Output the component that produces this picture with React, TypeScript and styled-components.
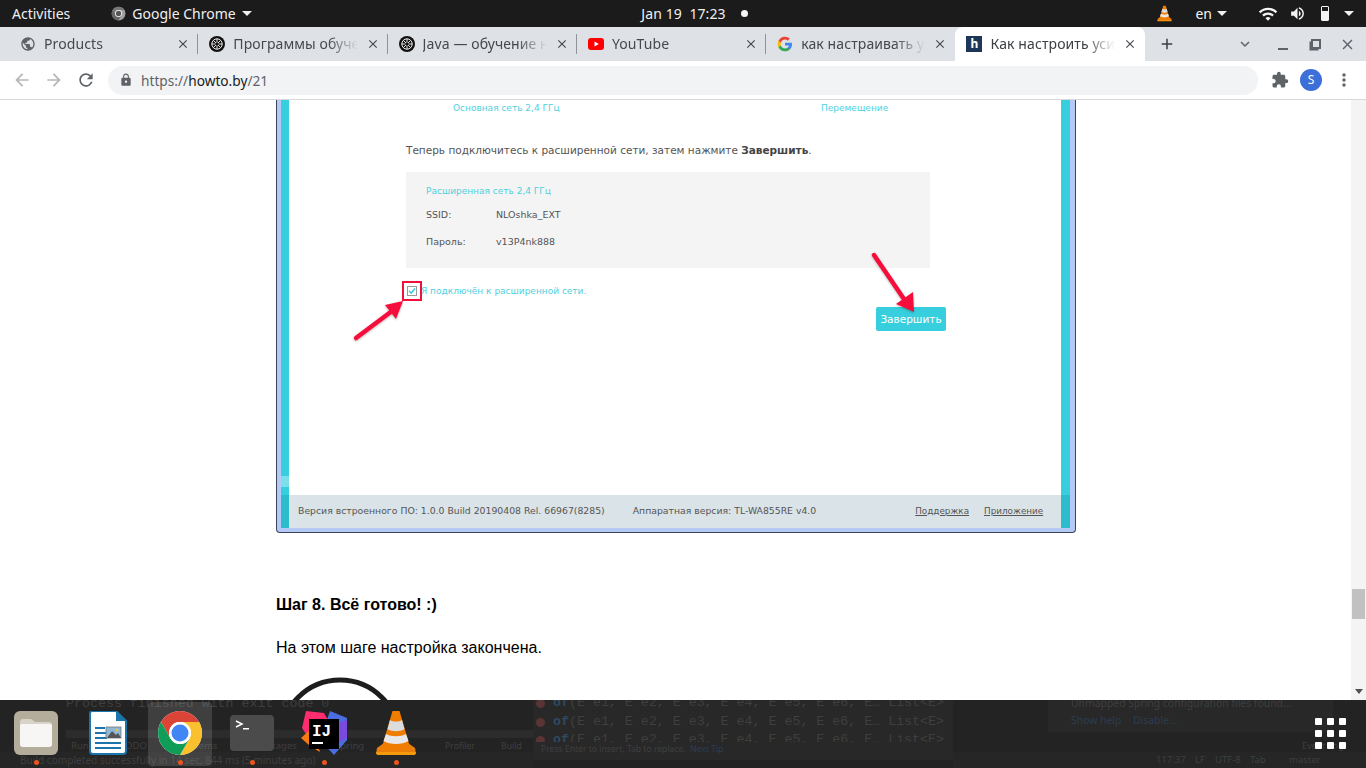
import React from 'react';
import styled, { createGlobalStyle } from 'styled-components';
import {
  MdAdd,
  MdArrowBack,
  MdArrowForward,
  MdClose,
  MdExpandMore,
  MdExtension,
  MdLock,
  MdMoreVert,
  MdPublic,
  MdRefresh,
  MdVolumeUp,
  MdWifi,
} from 'react-icons/md';

const uiFont = '"Noto Sans", "Open Sans", sans-serif';
const routerFont = '"DejaVu Sans", Verdana, sans-serif';
const monoFont = '"Liberation Mono", monospace';

const GlobalStyle = createGlobalStyle`
  html, body {
    margin: 0;
    padding: 0;
    background: #fff;
    overflow: hidden;
  }
  * {
    box-sizing: border-box;
  }
`;

const Screen = styled.div`
  width: 1366px;
  height: 768px;
  display: flex;
  flex-direction: column;
  overflow: hidden;
  font-family: ${uiFont};
`;

/* gnome top bar */
const TopBar = styled.div`
  height: 27px;
  flex: none;
  background: #1b1b1b;
  color: #f0f0f0;
  font-size: 14px;
  display: grid;
  grid-template-columns: 1fr auto 1fr;
  align-items: center;
  padding: 0 12px;
`;

const BarSide = styled.div<{ $end?: boolean }>`
  display: flex;
  align-items: center;
  justify-content: ${({ $end }) => ($end ? 'flex-end' : 'flex-start')};
`;

const AppMenu = styled.div`
  display: flex;
  align-items: center;
  gap: 6px;
  margin-left: 41px;
`;

const Caret = styled.span`
  width: 0;
  height: 0;
  border-left: 5px solid transparent;
  border-right: 5px solid transparent;
  border-top: 5px solid #f0f0f0;
  display: inline-block;
`;

const Clock = styled.div`
  display: flex;
  align-items: center;
  gap: 15px;
  letter-spacing: 0.1px;
  margin-left: 23px;
  white-space: pre;
`;

const RecordDot = styled.span`
  width: 7px;
  height: 7px;
  border-radius: 50%;
  background: #f4f4f4;
`;

const Tray = styled.div`
  display: flex;
  align-items: center;
  color: #f4f4f4;
`;

const TrayLang = styled.div`
  display: flex;
  align-items: center;
  gap: 5px;
  margin: 0 31px 0 23px;
`;

const VolumeIcon = styled(MdVolumeUp)`
  margin-left: 11px;
`;

const BatteryGlyph = styled.span`
  width: 8px;
  height: 15px;
  border: 1.5px solid #f4f4f4;
  border-radius: 1px;
  margin: 0 15px 0 15px;
  background: linear-gradient(to top, #f4f4f4 70%, transparent 70%);
`;

/* tab strip */
const TabStrip = styled.div`
  height: 34px;
  flex: none;
  background: #dee1e6;
  display: flex;
  align-items: stretch;
  padding-left: 9px;
`;

const Tab = styled.div<{ $active?: boolean; $last?: boolean }>`
  width: 189.3px;
  flex: none;
  display: flex;
  align-items: center;
  gap: 8px;
  padding: 0 8px 1px 11px;
  position: relative;
  font-size: 14px;
  letter-spacing: 0.1px;
  color: ${({ $active }) => ($active ? '#3c4043' : '#45484c')};
  background: ${({ $active }) => ($active ? '#fff' : 'transparent')};
  border-radius: 8px 8px 0 0;

  &::after {
    content: '';
    position: absolute;
    right: 0;
    top: 7px;
    bottom: 7px;
    width: 1px;
    background: ${({ $active, $last }) => ($active || $last ? 'transparent' : '#8f9296')};
  }
`;

const TabTitle = styled.span`
  flex: 1;
  overflow: hidden;
  white-space: nowrap;
  -webkit-mask-image: linear-gradient(to right, #000 76%, transparent 100%);
  mask-image: linear-gradient(to right, #000 76%, transparent 100%);
`;

const TabClose = styled(MdClose)`
  width: 14px;
  height: 14px;
  flex: none;
  color: #45484c;
`;

const FavSlot = styled.span`
  width: 16px;
  height: 16px;
  flex: none;
  display: flex;
  align-items: center;
  justify-content: center;
`;

const HowtoFav = styled.span`
  width: 16px;
  height: 16px;
  background: #1d3557;
  color: #fff;
  font: bold 12px/16px ${uiFont};
  text-align: center;
`;

const StripButton = styled.span<{ $left: number; $color?: string }>`
  margin-left: ${({ $left }) => $left}px;
  width: 18px;
  display: flex;
  align-items: center;
  justify-content: center;
  color: ${({ $color }) => $color || '#3c4043'};
`;

const Minimize = styled.span`
  width: 10px;
  height: 2px;
  background: #5f6368;
  margin-top: 9px;
`;

const Restore = styled.span`
  width: 10px;
  height: 10px;
  border: 2px solid #5f6368;
  box-shadow: -2px 2px 0 -0.5px #5f6368;
  margin-left: 2px;
`;

/* address bar row */
const Toolbar = styled.div`
  height: 39px;
  flex: none;
  background: #fff;
  border-bottom: 1px solid #d9d9d9;
  display: flex;
  align-items: center;
  padding: 0 10px 0 12px;
`;

const NavIcon = styled.span<{ $muted?: boolean }>`
  width: 20px;
  height: 20px;
  margin-right: 12px;
  display: flex;
  color: ${({ $muted }) => ($muted ? '#b4b6b9' : '#5f6368')};
`;

const UrlBar = styled.div`
  width: 1150px;
  height: 29px;
  border-radius: 15px;
  background: #f1f3f4;
  display: flex;
  align-items: center;
  gap: 8px;
  padding-left: 11px;
  font-size: 13.7px;
  color: #5f6368;
`;

const UrlHost = styled.span`
  color: #202124;
`;

const ToolRight = styled.div`
  display: flex;
  align-items: center;
  margin-left: 13px;
  color: #5f6368;
`;

const Avatar = styled.span`
  width: 22px;
  height: 22px;
  border-radius: 50%;
  background: #3c6fd8;
  color: #fff;
  font-size: 12px;
  line-height: 22px;
  text-align: center;
  margin: 0 12px 0 11px;
`;

/* page */
const Viewport = styled.div`
  flex: 1;
  min-height: 0;
  display: flex;
  background: #fff;
`;

const Article = styled.div`
  flex: 1;
  overflow: hidden;
  padding-left: 276px;
  color: #000;
  font-family: 'Liberation Sans', Arial, sans-serif;
  font-size: 16px;
`;

const ScrollTrack = styled.div`
  width: 15px;
  flex: none;
  background: #f4f4f4;
  display: flex;
  flex-direction: column;
  align-items: center;
  padding-top: 489px;
`;

const ScrollThumb = styled.div`
  width: 13px;
  height: 30px;
  background: #c1c1c1;
`;

const ScrollArrow = styled.span`
  margin-top: 70px;
  width: 0;
  height: 0;
  border-left: 4px solid transparent;
  border-right: 4px solid transparent;
  border-top: 5px solid #505050;
`;

const StepTitle = styled.div`
  font-weight: bold;
  line-height: 18px;
  margin-top: 63px;
`;

const StepText = styled.div`
  line-height: 18px;
  margin-top: 25px;
`;

const DoneBadge = styled.svg`
  display: block;
  margin: 20px 0 0 4px;
`;

/* embedded router screenshot */
const Shot = styled.div`
  width: 800px;
  height: 433px;
  position: relative;
  background: #b5c9f6;
  border: solid #3d4557;
  border-width: 0 1.5px 1.5px 1.5px;
  border-radius: 0 0 4px 4px;
  padding: 0 5px 4px 4px;
  display: flex;
  flex-direction: column;
  font-family: ${routerFont};
  font-size: 9.5px;
  color: #555;
`;

const ShotMain = styled.div`
  flex: 1;
  display: flex;
  min-height: 0;
`;

const LeftRail = styled.div`
  width: 8px;
  flex: none;
  background: linear-gradient(
    to bottom,
    #37cfdd 0,
    #37cfdd 376px,
    #7be0e9 376px,
    #7be0e9 387px,
    #37cfdd 387px
  );
`;

const RightRail = styled.div`
  width: 9px;
  flex: none;
  background: #37cfdd;
`;

const ShotBody = styled.div`
  flex: 1;
  background: #fff;
  padding-left: 117px;
`;

const BandRow = styled.div`
  display: flex;
  margin-left: 47px;
  padding-top: 1px;
  height: 15px;
  font-size: 9px;
  color: #4fd0dd;
  line-height: 14px;
`;

const BandLabel = styled.span<{ $width?: number }>`
  width: ${({ $width }) => ($width ? `${$width}px` : 'auto')};
  flex: none;
`;

const Lead = styled.div`
  margin-top: 28px;
  font-size: 10.5px;
  line-height: 14px;
  color: #555;
  white-space: nowrap;
`;

const LeadStrong = styled.b`
  color: #444;
`;

const InfoBox = styled.div`
  width: 524px;
  height: 96px;
  margin-top: 15px;
  background: #f4f4f4;
  padding: 13px 20px 0;
`;

const InfoHead = styled.div`
  color: #4fd0dd;
  font-size: 9px;
  line-height: 13px;
`;

const InfoRow = styled.div<{ $top: number }>`
  display: flex;
  line-height: 13px;
  margin-top: ${({ $top }) => $top}px;
`;

const InfoKey = styled.span`
  width: 70px;
`;

const ConfirmRow = styled.div`
  display: flex;
  align-items: center;
  gap: 4px;
  margin-top: 18px;
  margin-left: 1px;
  color: #4fd0dd;
  font-size: 9px;
  height: 10px;
`;

const CheckBox = styled.span`
  width: 10px;
  height: 10px;
  border: 1px solid #9a9a9a;
  background: #fff;
  display: flex;
  align-items: center;
  justify-content: center;
  position: relative;

  &::after {
    content: '';
    position: absolute;
    inset: -6px;
    border: 2.5px solid #f0103a;
  }
`;

const FinishButton = styled.div`
  width: 70px;
  height: 24px;
  margin: 11px 0 0 470px;
  background: #37cfdd;
  border-radius: 2px;
  color: #fff;
  font-size: 10.5px;
  line-height: 24px;
  text-align: center;
`;

const ShotFooter = styled.div`
  height: 33px;
  flex: none;
  background: #dae3e7;
  border-left: 8px solid #2cbccb;
  border-right: 9px solid #2cbccb;
  display: flex;
  align-items: center;
  padding: 0 17px 2px 9px;
  font-size: 9.3px;
  color: #555;
`;

const FooterText = styled.span<{ $gap?: number }>`
  margin-left: ${({ $gap }) => $gap || 0}px;
  white-space: nowrap;
`;

const FooterLink = styled.span<{ $gap: number }>`
  margin-left: ${({ $gap }) => $gap}px;
  font-size: 8.8px;
  text-decoration: underline;
  white-space: nowrap;
`;

const ArrowsLayer = styled.svg`
  position: absolute;
  left: -1.5px;
  top: 0;
  pointer-events: none;
`;

/* dock, over a dimmed IDE window */
const Dock = styled.div`
  height: 68px;
  flex: none;
  position: relative;
  background: #232323;
  display: flex;
  overflow: hidden;
`;

const GhostPanel = styled.div<{ $x: number; $y?: number; $w: number; $h: number; $fill?: string }>`
  position: absolute;
  left: ${({ $x }) => $x}px;
  top: ${({ $y }) => $y || 0}px;
  width: ${({ $w }) => $w}px;
  height: ${({ $h }) => $h}px;
  background: ${({ $fill }) => $fill || '#282828'};
`;

const Ghost = styled.span<{ $x: number; $y: number; $mono?: boolean; $blue?: boolean; $size?: number }>`
  position: absolute;
  left: ${({ $x }) => $x}px;
  top: ${({ $y }) => $y}px;
  white-space: nowrap;
  line-height: 14px;
  color: ${({ $blue }) => ($blue ? '#2c3d52' : '#3f3f3f')};
  font-family: ${({ $mono }) => ($mono ? monoFont : uiFont)};
  font-size: ${({ $size, $mono }) => $size || ($mono ? 13.3 : 9.5)}px;
`;

const GhostKeyword = styled.b`
  color: #2e4a63;
`;

const GhostMark = styled.span<{ $y: number }>`
  position: absolute;
  left: 536px;
  top: ${({ $y }) => $y}px;
  width: 9px;
  height: 9px;
  border-radius: 50%;
  background: #5a3434;
`;

const DockSlot = styled.div<{ $active?: boolean; $running?: boolean }>`
  width: 72px;
  flex: none;
  position: relative;
  display: flex;
  align-items: center;
  justify-content: center;
  padding-bottom: 2px;

  &::before {
    content: '';
    position: absolute;
    left: 4px;
    right: 4px;
    top: 2px;
    bottom: 2px;
    border-radius: 4px;
    background: ${({ $active }) => ($active ? 'rgba(255, 255, 255, 0.13)' : 'transparent')};
  }

  &::after {
    content: '';
    position: absolute;
    left: 34px;
    bottom: 3px;
    width: 5px;
    height: 5px;
    border-radius: 50%;
    background: ${({ $running }) => ($running ? '#e95420' : 'transparent')};
  }

  svg {
    position: relative;
  }
`;

const AppsGrid = styled.div`
  position: absolute;
  left: 1315px;
  top: 18px;
  display: grid;
  grid-template-columns: repeat(3, 7px);
  grid-auto-rows: 7px;
  gap: 5px;
`;

const AppsDot = styled.span`
  background: #fff;
  border-radius: 1px;
`;

const ChromeLogo: React.FC<{ size: number; mono?: boolean }> = ({ size, mono }) => {
  const sector = 'M5 13A22 22 0 0 1 43 13H24A11 11 0 0 0 14.47 29.5Z';
  return (
    <svg width={size} height={size} viewBox="0 0 48 48">
      <circle cx="24" cy="24" r="22" fill={mono ? '#8a8a8a' : '#fff'} />
      <path d={sector} fill={mono ? '#777' : '#db4437'} />
      <path d={sector} fill={mono ? '#a0a0a0' : '#fbc02d'} transform="rotate(120 24 24)" />
      <path d={sector} fill={mono ? '#666' : '#0f9d58'} transform="rotate(240 24 24)" />
      <circle cx="24" cy="24" r="11" fill="#fff" />
      <circle cx="24" cy="24" r="8.5" fill={mono ? '#555' : '#4285f4'} />
    </svg>
  );
};

const KnotFav: React.FC = () => (
  <svg width="16" height="16" viewBox="0 0 16 16">
    <circle cx="8" cy="8" r="8" fill="#111" />
    <g fill="none" stroke="#fff" strokeWidth="0.9">
      <circle cx="8" cy="8" r="5.2" />
      <path d="M4.5 4.5 11.5 11.5M11.5 4.5 4.5 11.5M8 2.8V13.2M2.8 8H13.2" />
    </g>
    <circle cx="8" cy="8" r="1.6" fill="#111" />
  </svg>
);

const YoutubeFav: React.FC = () => (
  <svg width="16" height="16" viewBox="0 0 16 16">
    <rect x="0" y="2" width="16" height="12" rx="3" fill="#f00" />
    <path d="M6.5 5.5 10.8 8 6.5 10.5Z" fill="#fff" />
  </svg>
);

const GoogleFav: React.FC = () => (
  <svg width="16" height="16" viewBox="0 0 48 48">
    <path fill="#4285f4" d="M45 24.5c0-1.6-.1-3.100-.4-4.500H24v8.500h11.800c-.5 2.700-2 5-4.400 6.600v5.500h7C42.600 36.700 45 31.100 45 24.500z" />
    <path fill="#34a853" d="M24 46c5.900 0 10.900-2 14.400-5.300l-7-5.500c-2 1.300-4.500 2.100-7.400 2.100-5.700 0-10.500-3.800-12.200-9H4.500v5.600C8 41.100 15.500 46 24 46z" />
    <path fill="#fbbc05" d="M11.800 28.300c-.4-1.300-.7-2.800-.7-4.300s.3-3 .7-4.300v-5.600H4.500C3 17 2 20.400 2 24s1 7 2.500 9.900l7.300-5.600z" />
    <path fill="#ea4335" d="M24 10.700c3.200 0 6.100 1.100 8.400 3.300l6.200-6.200C34.900 4.300 29.900 2 24 2 15.500 2 8 6.900 4.500 14.100l7.300 5.600c1.700-5.200 6.500-9 12.200-9z" />
  </svg>
);

const VlcCone: React.FC<{ width: number; height: number }> = ({ width, height }) => (
  <svg width={width} height={height} viewBox="0 0 42 46">
    <path d="M2 38 9 33H33L40 38 41 44H1Z" fill="#e97f08" />
    <path d="M1 42H41L40 45H2Z" fill="#f59a0c" />
    <path d="M17.500 1H24.500L35 37C30 42 12 42 7 37Z" fill="#f07d00" />
    <path d="M15 10C18 12 24 12 27 10L29.500 19C25 22 17 22 12.500 19Z" fill="#dcdcdc" />
    <path d="M11 24C16 27 26 27 31 24L33.500 31C27 35 15 35 8.500 31Z" fill="#e8e8e8" />
  </svg>
);

const FilesIcon: React.FC = () => (
  <svg width="44" height="44" viewBox="0 0 44 44">
    <rect x="0" y="0" width="44" height="44" rx="6" fill="#b5ad9c" />
    <path d="M6 11a3 3 0 0 1 3-3h8l4 3h14a3 3 0 0 1 3 3V33a3 3 0 0 1-3 3H9a3 3 0 0 1-3-3Z" fill="#d9d4ca" />
    <path d="M6 15a2 2 0 0 1 2-2H36a2 2 0 0 1 2 2V33a3 3 0 0 1-3 3H9a3 3 0 0 1-3-3Z" fill="#f7f6f4" />
  </svg>
);

const WriterIcon: React.FC = () => (
  <svg width="38" height="44" viewBox="0 0 38 44">
    <path d="M2 0H27L37 10V40a3 3 0 0 1-3 3H4a3 3 0 0 1-3-3V2Z" fill="#fff" stroke="#1b75ac" strokeWidth="2" />
    <path d="M27 0 37 10H27Z" fill="#1b75ac" />
    <g fill="#1b75ac">
      <rect x="6" y="16" width="10" height="2" />
      <rect x="6" y="21" width="12" height="2" />
      <rect x="6" y="26" width="12" height="2" />
      <rect x="6" y="31" width="26" height="2" />
      <rect x="6" y="36" width="26" height="2" />
    </g>
    <rect x="17" y="16" width="15" height="11" fill="#8fb8d8" stroke="#777" strokeWidth="0.8" />
    <path d="M18 27 23 20 27 24 29 22 32 27Z" fill="#555" />
    <circle cx="28" cy="19" r="1.300" fill="#f2c230" />
  </svg>
);

const TerminalIcon: React.FC = () => (
  <svg width="44" height="36" viewBox="0 0 44 36">
    <rect x="0" y="0" width="44" height="36" rx="4" fill="#4b4b4b" />
    <path d="M6 6 12 9 6 12" fill="none" stroke="#fff" strokeWidth="1.500" />
    <rect x="13" y="13" width="6" height="1.500" fill="#fff" />
  </svg>
);

const IdeaIcon: React.FC = () => (
  <svg width="48" height="46" viewBox="0 0 48 46">
    <path d="M6 1 24 3 32 17 10 30 2 18Z" fill="#fe2d70" />
    <path d="M30 1 47 8 47 30 34 45 20 30Z" fill="#4a6ee0" />
    <path d="M1 28 12 18 20 42 10 36Z" fill="#f97a12" />
    <path d="M34 14 47 10 47 28 36 34Z" fill="#7a4ae0" />
    <rect x="9" y="9" width="30" height="30" fill="#000" />
    <text x="12" y="26" fill="#fff" fontFamily={monoFont} fontWeight="bold" fontSize="16">IJ</text>
    <rect x="12" y="32" width="11" height="2" fill="#fff" />
  </svg>
);

const Arrows: React.FC = () => (
  <ArrowsLayer width="800" height="433" viewBox="276 100 800 433">
    <defs>
      <filter id="arrowShadow" x="-20%" y="-20%" width="140%" height="140%">
        <feDropShadow dx="0" dy="1" stdDeviation="1.2" floodColor="#000" floodOpacity="0.3" />
      </filter>
    </defs>
    <g filter="url(#arrowShadow)">
      <path d="M356 338 392 311" stroke="#f5113b" strokeWidth="4.5" strokeLinecap="round" />
      <path d="M403 301 385 305 396 319Z" fill="#f5113b" />
      <path d="M874 255 906 302" stroke="#f5113b" strokeWidth="4.5" strokeLinecap="round" />
      <path d="M914 312 896 304 913 292Z" fill="#f5113b" />
    </g>
  </ArrowsLayer>
);

const tabs = [
  { title: 'Products', icon: <MdPublic size={16} color="#5f6368" /> },
  { title: 'Программы обучения', icon: <KnotFav /> },
  { title: 'Java — обучение на', icon: <KnotFav /> },
  { title: 'YouTube', icon: <YoutubeFav /> },
  { title: 'как настраивать усилитель', icon: <GoogleFav /> },
  { title: 'Как настроить усилитель', icon: <HowtoFav>h</HowtoFav>, active: true },
];

const popupRow = 'E e1, E e2, E e3, E e4, E e5, E e6, E…  List<E>';

const App: React.FC = () => {
  return (
    <Screen>
      <GlobalStyle />
      <TopBar>
        <BarSide>
          Activities
          <AppMenu>
            <ChromeLogo size={15} mono />
            Google Chrome
            <Caret />
          </AppMenu>
        </BarSide>
        <Clock>
          Jan 19  17:23
          <RecordDot />
        </Clock>
        <BarSide $end>
          <Tray>
            <VlcCone width={15} height={17} />
            <TrayLang>
              en
              <Caret />
            </TrayLang>
            <MdWifi size={20} />
            <VolumeIcon size={17} />
            <BatteryGlyph />
            <Caret />
          </Tray>
        </BarSide>
      </TopBar>

      <TabStrip>
        {tabs.map((tab, index) => (
          <Tab key={tab.title} $active={tab.active} $last={index === tabs.length - 2}>
            <FavSlot>{tab.icon}</FavSlot>
            <TabTitle>{tab.title}</TabTitle>
            <TabClose />
          </Tab>
        ))}
        <StripButton $left={13}>
          <MdAdd size={20} />
        </StripButton>
        <StripButton $left={60}>
          <MdExpandMore size={18} color="#5f6368" />
        </StripButton>
        <StripButton $left={20}>
          <Minimize />
        </StripButton>
        <StripButton $left={14}>
          <Restore />
        </StripButton>
        <StripButton $left={15} $color="#5f6368">
          <MdClose size={17} />
        </StripButton>
      </TabStrip>

      <Toolbar>
        <NavIcon $muted>
          <MdArrowBack size={20} />
        </NavIcon>
        <NavIcon $muted>
          <MdArrowForward size={20} />
        </NavIcon>
        <NavIcon>
          <MdRefresh size={20} />
        </NavIcon>
        <UrlBar>
          <MdLock size={14} />
          <span>
            https://<UrlHost>howto.by</UrlHost>/21
          </span>
        </UrlBar>
        <ToolRight>
          <MdExtension size={18} />
          <Avatar>S</Avatar>
          <MdMoreVert size={20} />
        </ToolRight>
      </Toolbar>

      <Viewport>
        <Article>
          <Shot>
            <ShotMain>
              <LeftRail />
              <ShotBody>
                <BandRow>
                  <BandLabel $width={368}>Основная сеть 2,4 ГГц</BandLabel>
                  <BandLabel>Перемещение</BandLabel>
                </BandRow>
                <Lead>
                  Теперь подключитесь к расширенной сети, затем нажмите <LeadStrong>Завершить</LeadStrong>.
                </Lead>
                <InfoBox>
                  <InfoHead>Расширенная сеть 2,4 ГГц</InfoHead>
                  <InfoRow $top={10}>
                    <InfoKey>SSID:</InfoKey>
                    NLOshka_EXT
                  </InfoRow>
                  <InfoRow $top={14}>
                    <InfoKey>Пароль:</InfoKey>
                    v13P4nk888
                  </InfoRow>
                </InfoBox>
                <ConfirmRow>
                  <CheckBox>
                    <svg width="8" height="8" viewBox="0 0 8 8">
                      <path d="M1 4 3.200 6 7 1.500" fill="none" stroke="#37cfdd" strokeWidth="1.600" />
                    </svg>
                  </CheckBox>
                  Я подключён к расширенной сети.
                </ConfirmRow>
                <FinishButton>Завершить</FinishButton>
              </ShotBody>
              <RightRail />
            </ShotMain>
            <ShotFooter>
              <FooterText>Версия встроенного ПО: 1.0.0 Build 20190408 Rel. 66967(8285)</FooterText>
              <FooterText $gap={28}>Аппаратная версия: TL-WA855RE v4.0</FooterText>
              <FooterLink $gap={99}>Поддержка</FooterLink>
              <FooterLink $gap={15}>Приложение</FooterLink>
            </ShotFooter>
            <Arrows />
          </Shot>
          <StepTitle>Шаг 8. Всё готово! :)</StepTitle>
          <StepText>На этом шаге настройка закончена.</StepText>
          <DoneBadge width="130" height="130" viewBox="0 0 130 130">
            <circle cx="60" cy="62" r="59" fill="none" stroke="#1d1d1d" strokeWidth="5" />
          </DoneBadge>
        </Article>
        <ScrollTrack>
          <ScrollThumb />
          <ScrollArrow />
        </ScrollTrack>
      </Viewport>

      <Dock>
        <GhostPanel $x={66} $y={30} $w={467} $h={8} $fill="#2c2c2c" />
        <GhostPanel $x={533} $w={420} $h={60} />
        <GhostPanel $x={1048} $w={285} $h={32} />
        <GhostPanel $x={0} $y={52} $w={533} $h={16} $fill="#262626" />
        <GhostPanel $x={953} $y={52} $w={413} $h={16} $fill="#262626" />
        <Ghost $x={66} $y={-3} $mono>Process finished with exit code 0</Ghost>
        <GhostMark $y={-1} />
        <GhostMark $y={18} />
        <GhostMark $y={36} />
        <Ghost $x={553} $y={-4} $mono><GhostKeyword>of</GhostKeyword>({popupRow}</Ghost>
        <Ghost $x={553} $y={15} $mono><GhostKeyword>of</GhostKeyword>({popupRow}</Ghost>
        <Ghost $x={553} $y={33} $mono><GhostKeyword>of</GhostKeyword>({popupRow}</Ghost>
        <GhostPanel $x={533} $y={42} $w={420} $h={18} />
        <Ghost $x={1071} $y={-4} $size={10.4}>Unmapped Spring configuration files found...</Ghost>
        <Ghost $x={1071} $y={13} $size={10.4} $blue>Show help</Ghost>
        <Ghost $x={1133} $y={13} $size={10.4} $blue>Disable...</Ghost>
        <Ghost $x={71} $y={39}>Run</Ghost>
        <Ghost $x={120} $y={39}>TODO</Ghost>
        <Ghost $x={175} $y={39}>Problems</Ghost>
        <Ghost $x={255} $y={39}>Packages</Ghost>
        <Ghost $x={335} $y={39}>Spring</Ghost>
        <Ghost $x={445} $y={39} $size={8.7}>Profiler</Ghost>
        <Ghost $x={501} $y={39} $size={8.7}>Build</Ghost>
        <Ghost $x={541} $y={42} $size={8.6}>Press Enter to insert, Tab to replace.</Ghost>
        <Ghost $x={690} $y={42} $size={8.6} $blue>Next Tip</Ghost>
        <Ghost $x={1302} $y={39} $size={9}>Event Log</Ghost>
        <Ghost $x={20} $y={53} $size={10.1}>Build completed successfully in 14 sec, 844 ms (5 minutes ago)</Ghost>
        <Ghost $x={1156} $y={53} $size={9.5}>117:37</Ghost>
        <Ghost $x={1195} $y={53} $size={9.5}>LF</Ghost>
        <Ghost $x={1215} $y={53} $size={9.5}>UTF-8</Ghost>
        <Ghost $x={1250} $y={53} $size={9.5}>Tab</Ghost>
        <Ghost $x={1289} $y={53} $size={9.5}>master</Ghost>

        <DockSlot $running><FilesIcon /></DockSlot>
        <DockSlot><WriterIcon /></DockSlot>
        <DockSlot $active $running><ChromeLogo size={48} /></DockSlot>
        <DockSlot $running><TerminalIcon /></DockSlot>
        <DockSlot $running><IdeaIcon /></DockSlot>
        <DockSlot $running><VlcCone width={42} height={46} /></DockSlot>

        <AppsGrid>
          {Array.from({ length: 9 }, (_, i) => (
            <AppsDot key={i} />
          ))}
        </AppsGrid>
      </Dock>
    </Screen>
  );
};

export default App;
